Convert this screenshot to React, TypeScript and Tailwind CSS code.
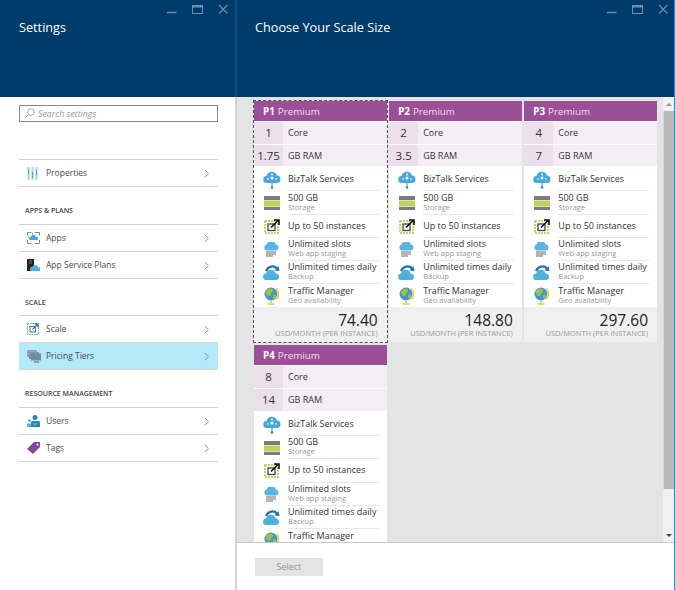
import React from "react";

const font = { fontFamily: '"Open Sans","Noto Sans",sans-serif' };

function WinControls({ className }: { className: string }) {
  return (
    <svg width="62" height="14" viewBox="0 0 62 14" fill="none" stroke="#6d8eab" className={`absolute top-[2px] ${className}`}>
      <path d="M1 10.500h9.500" strokeWidth="1.500" />
      <rect x="26.500" y="3.500" width="10" height="8" strokeWidth="1" />
      <path d="M26.500 4.500h10" strokeWidth="2" />
      <path d="M53 3l8.500 8.500M61.500 3L53 11.500" strokeWidth="1.100" />
    </svg>
  );
}

const Chevron = () => (
  <svg width="5" height="9" viewBox="0 0 5 9" fill="none" stroke="#909090" strokeWidth="1" className="mr-[1px] shrink-0">
    <path d="M.7.700l3.600 3.800L.7 8.300" />
  </svg>
);

const MenuIcons: Record<string, React.ReactNode> = {
  Properties: (
    <svg width="11" height="13" viewBox="0 0 11 13">
      <path d="M1.500 0v13M5.500 0v13M9.500 0v13" stroke="#a8d8ec" strokeWidth="2.200" />
      <path d="M1.500 2v5M5.500 5v6M9.500 3v5" stroke="#6d9dbb" strokeWidth="1" />
    </svg>
  ),
  Apps: (
    <svg width="13" height="12" viewBox="0 0 13 12">
      <path d="M.5 3.500V.5h4M8 .5h4.500v3M.5 8v3.500h4M12.500 8v3.500H8" fill="none" stroke="#888" />
      <path d="M5.500.5v3.500M.5 5h3" stroke="#aaa" />
      <path d="M3 8a1.500 1.500 0 0 1 .6-2.900A2.800 2.800 0 0 1 9 4.800 1.600 1.600 0 0 1 10 8z" fill="#4aa9dc" />
    </svg>
  ),
  "App Service Plans": (
    <svg width="13" height="12" viewBox="0 0 13 12">
      <rect x="0" y="0" width="7" height="12" fill="#222" />
      <path d="M2 2h3M2 4h3" stroke="#777" />
      <path d="M4 12a2.500 2.500 0 0 1 1.500-4.500A3 3 0 0 1 11 8.500 1.800 1.800 0 0 1 13 12z" fill="#52b0dd" />
    </svg>
  ),
  Scale: (
    <svg width="12" height="12" viewBox="0 0 12 12" fill="none">
      <rect x=".5" y=".5" width="11" height="11" stroke="#3e9bd1" strokeDasharray="1.500 1" />
      <rect x="3" y="3.500" width="5.500" height="5.500" stroke="#5a6a75" strokeWidth="1" />
      <path d="M5.500 6.500l5-5M7.500 1h3.500v3.500" stroke="#2c7fb3" strokeWidth="1.300" />
    </svg>
  ),
  "Pricing Tiers": (
    <svg width="14" height="13" viewBox="0 0 14 13">
      <rect x="0" y="0" width="10" height="7" fill="#8ea7b0" />
      <rect x="2" y="2" width="10" height="7" fill="#7a9aa8" />
      <rect x="4" y="3.500" width="10" height="7" fill="#6f8d9b" />
      <path d="M7 12h5" stroke="#6f8d9b" strokeWidth="1.500" />
    </svg>
  ),
  Users: (
    <svg width="13" height="12" viewBox="0 0 13 12">
      <circle cx="8" cy="2.500" r="2.500" fill="#1f88c0" />
      <path d="M4 12V7.500A1.500 1.500 0 0 1 5.500 6h5A2 2 0 0 1 13 8v4z" fill="#1f88c0" />
      <circle cx="2.500" cy="5.500" r="1.500" fill="#5fb1d8" />
      <path d="M0 12V8.500h4V12z" fill="#5fb1d8" />
      <path d="M7 8.500l1 1 1-1" stroke="#fff" fill="none" />
    </svg>
  ),
  Tags: (
    <svg width="13" height="12" viewBox="0 0 13 12">
      <path d="M0 7l7-7h6v5l-7 7z" fill="#804998" />
      <circle cx="10.500" cy="2.500" r="1" fill="#fff" />
    </svg>
  ),
};

function MenuItem({ label, active }: { label: string; active?: boolean }) {
  return (
    <div className={`flex h-[27px] items-center border-b border-[#d6d6d6] px-[8px] text-[8.500px] text-[#4a4a4a] ${active ? "bg-[#b3e9f9]" : ""}`}>
      <div className="flex w-[18px] shrink-0 justify-start">{MenuIcons[label]}</div>
      <span className="ml-[1px] flex-1">{label}</span>
      <Chevron />
    </div>
  );
}

function MenuGroup({ title, items, active, className, headingClass }: { title?: string; items: string[]; active?: string; className?: string; headingClass?: string }) {
  return (
    <div className={className}>
      {title && <div className={`h-[12px] pl-[6px] text-[7px] leading-[12px] font-semibold text-[#444] ${headingClass ?? ""}`}>{title}</div>}
      <div className="border-t border-[#d0d0d0]">
        {items.map((i) => (
          <MenuItem key={i} label={i} active={i === active} />
        ))}
      </div>
    </div>
  );
}

const FeatureIcons: React.ReactNode[] = [
  <svg width="18" height="18" viewBox="1 0 18 18">
    <path d="M5 12a3.500 3.500 0 0 1-.5-7A5.500 5.500 0 0 1 15 4.500 3.800 3.800 0 0 1 15.500 12z" fill="#45a9e0" />
    <path d="M10 12v5" stroke="#3b87bf" />
    <circle cx="10" cy="16.500" r="1.300" fill="#3b87bf" />
    <circle cx="10" cy="7" r="1.500" fill="#fff" />
    <circle cx="6" cy="8" r=".9" fill="#e6f16a" />
    <circle cx="14" cy="8" r=".9" fill="#e6f16a" />
    <circle cx="10" cy="3.500" r=".9" fill="#fff" />
  </svg>,
  <svg width="16" height="14" viewBox="0 0 16 14">
    <rect width="16" height="14" fill="#7c7c7c" />
    <rect x="0" y="5" width="16" height="5" fill="#c1d347" />
    <rect x="0" y="4" width="16" height="1" fill="#ddd" />
    <rect x="0" y="10" width="16" height="1" fill="#ddd" />
  </svg>,
  <svg width="16" height="15" viewBox="0 0 16 15" fill="none">
    <rect x="1" y="2" width="13" height="12" stroke="#b5c334" strokeWidth="1.500" strokeDasharray="2 1" />
    <rect x="4" y="5" width="7" height="6.500" stroke="#444" strokeWidth="1.300" />
    <path d="M7 8.500L14 1.500M10 1h5v5" stroke="#111" strokeWidth="1.600" />
  </svg>,
  <svg width="17" height="15" viewBox="0 0 17 15">
    <path d="M4 8.500a3 3 0 0 1-.4-5.900A4.800 4.800 0 0 1 12.800 2.500 3.100 3.100 0 0 1 13.500 8.500z" fill="#59b4e3" />
    <path d="M3 10h10M3 12h10M3 14h7" stroke="#6a6a6a" strokeWidth="1" />
  </svg>,
  <svg width="17" height="15" viewBox="0 0 17 15">
    <path d="M3.500 15a3.200 3.200 0 0 1-.4-6.400A4.800 4.800 0 0 1 12.500 8.500 3.300 3.300 0 0 1 13.500 15z" fill="#4fb0e0" />
    <path d="M3 6C5 1 11 0 14 3.500" fill="none" stroke="#1f6fb5" strokeWidth="2.200" />
    <path d="M11.500 5.500L16.500 6 15.500 1z" fill="#1f6fb5" />
  </svg>,
  <svg width="15" height="18" viewBox="0 0 15 18">
    <circle cx="7" cy="7" r="6.500" fill="#3f97d3" />
    <path d="M3 3c2-2 5-2 6 0s-2 2-2 4-3 3-4 1-2-3 0-5zM9 8c2-1 4 0 3 2s-3 2-3 0z" fill="#9bc243" />
    <path d="M12 1.500a7 7 0 0 1 0 11" fill="none" stroke="#f2d33a" strokeWidth="1.500" />
    <path d="M7 14v2M3.500 17h7" stroke="#f2c52e" strokeWidth="1.600" />
  </svg>,
];

const features = [
  ["BizTalk Services"],
  ["500 GB", "Storage"],
  ["Up to 50 instances"],
  ["Unlimited slots", "Web app staging"],
  ["Unlimited times daily", "Backup"],
  ["Traffic Manager", "Geo availability"],
];

function Card({ tier, core, ram, price, selected }: { tier: string; core: string; ram: string; price?: string; selected?: boolean }) {
  return (
    <div className={`relative flex h-[241px] flex-col bg-white ${selected ? "outline outline-dashed outline-1 outline-[#555]" : ""}`}>
      <div className="flex h-[20px] items-center bg-[#9b4f96] pt-[2px] pl-[9px] text-[9.800px] text-[#f3dff0]">
        <span className="font-bold text-white">{tier}</span>
        <span className="ml-[3px]">Premium</span>
      </div>
      {[[core, "Core"], [ram, "GB RAM"]].map(([n, l]) => (
        <div key={l} className="mt-[1px] flex h-[22px] bg-[#f5edf5]">
          <div className="flex w-[29px] items-center justify-center bg-[#ecdfec] text-[11.500px] text-[#333]">{n}</div>
          <div className="flex items-center pl-[5px] text-[9px] text-[#333]">{l}</div>
        </div>
      ))}
      <div className="mt-[2px] flex flex-col">
        {features.map((f, i) => (
          <div key={f[0]} className="flex h-[23.200px] items-center pr-[8px]">
            <div className="flex w-[34px] shrink-0 justify-center pl-[1px]">{FeatureIcons[i]}</div>
            <div className={`flex h-full flex-1 flex-col justify-center ${f[1] ? "pb-[2px]" : ""} ${i < 5 ? "border-b border-[#e6e6f0]" : ""}`}>
              <div className="text-[9px] leading-[10px] whitespace-nowrap text-[#333]">{f[0]}</div>
              {f[1] && <div className="text-[7.500px] leading-[8px] whitespace-nowrap text-[#999]">{f[1]}</div>}
            </div>
          </div>
        ))}
      </div>
      {price && (
        <div className="mt-auto flex h-[35px] flex-col items-end justify-center bg-[#f0f0f0] pr-[9px]">
          <div className="text-[15.500px] leading-[18px] text-[#222]">{price}</div>
          <div className="text-[7.500px] leading-[9px] text-[#999]">USD/MONTH (PER INSTANCE)</div>
        </div>
      )}
    </div>
  );
}

function ScrollBar() {
  return (
    <div className="flex w-[11px] shrink-0 flex-col bg-[#f0f0f0]">
      <div className="flex h-[14px] items-center justify-center">
        <div className="h-0 w-0 border-x-[3px] border-b-[3px] border-x-transparent border-b-[#999]" />
      </div>
      <div className="h-[378px] border-l border-[#d8d8d8] bg-[#b9b9b9]" />
      <div className="flex flex-1 items-end justify-center pb-[5px]">
        <div className="h-0 w-0 border-x-[3px] border-t-[3px] border-x-transparent border-t-[#444]" />
      </div>
    </div>
  );
}

export default function App() {
  return (
    <div className="flex h-[590px] w-[675px] overflow-hidden bg-white" style={font}>
      <div className="flex w-[237px] shrink-0 flex-col border-r-2 border-[#d4d4d4]">
        <div className="relative -mr-[2px] h-[97px] shrink-0 border-r-2 border-[#0e4d80] bg-[#003c6b] pl-[19px] pt-[17px] text-[12.700px] leading-[20px] text-white">
          Settings
          <WinControls className="right-[7px]" />
        </div>
        <div className="flex-1 pl-[19px] pr-[17px] pt-[8px]">
          <div className="flex h-[17px] items-center border border-[#8a8a8a] bg-white pl-[4px] pt-[2px] text-[8.800px] italic text-[#999]">
            <svg width="11" height="11" viewBox="0 0 11 11" fill="none" stroke="#aaa" strokeWidth="1" className="-mt-[2px]">
              <circle cx="7" cy="4" r="3.300" />
              <path d="M4.500 6.500L.5 10.500" />
            </svg>
            <span className="ml-[3px]">Search settings</span>
          </div>
          <MenuGroup className="mt-[37px]" items={["Properties"]} />
          <MenuGroup className="mt-[18px]" headingClass="mb-[7px]" title="APPS & PLANS" items={["Apps", "App Service Plans"]} />
          <MenuGroup className="mt-[18px]" headingClass="mb-[6px]" title="SCALE" items={["Scale", "Pricing Tiers"]} active="Pricing Tiers" />
          <MenuGroup className="mt-[18px]" headingClass="mb-[7px]" title="RESOURCE MANAGEMENT" items={["Users", "Tags"]} />
        </div>
      </div>
      <div className="flex min-w-0 flex-1 flex-col border-r border-[#2b88d8]">
        <div className="relative h-[97px] shrink-0 bg-[#003c6b] pl-[18px] pt-[17px] text-[12.700px] leading-[20px] text-white">
          Choose Your Scale Size
          <WinControls className="right-[6px]" />
        </div>
        <div className="flex min-h-0 flex-1 border-b border-[#c8c8c8] bg-[#e4e4e4]">
          <div className="min-w-0 flex-1 overflow-hidden pl-[17px] pr-[6px] pt-[4px]">
            <div className="grid grid-cols-3 gap-x-[2.500px] gap-y-[3px]">
              <Card tier="P1" core="1" ram="1.75" price="74.40" selected />
              <Card tier="P2" core="2" ram="3.5" price="148.80" />
              <Card tier="P3" core="4" ram="7" price="297.60" />
              <Card tier="P4" core="8" ram="14" />
            </div>
          </div>
          <ScrollBar />
        </div>
        <div className="h-[47px] shrink-0 pl-[18px] pt-[15px]">
          <div className="flex h-[18px] w-[68px] items-center justify-center bg-[#e4e4e4] text-[9px] text-[#999]">Select</div>
        </div>
      </div>
    </div>
  );
}
